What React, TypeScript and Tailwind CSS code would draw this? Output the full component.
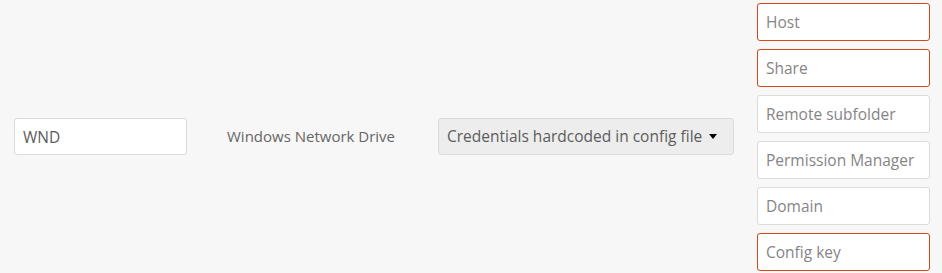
import { useState } from "react"

const fields = [
  { placeholder: "Host", error: true },
  { placeholder: "Share", error: true },
  { placeholder: "Remote subfolder", error: false },
  { placeholder: "Permission Manager", error: false },
  { placeholder: "Domain", error: false },
  { placeholder: "Config key", error: true },
]

export default function App() {
  const [name, setName] = useState("WND")

  return (
    <div className="w-[942px] h-[273px] bg-[#f7f7f7] flex items-center font-['Open_Sans',sans-serif] text-[15.5px] text-[#5c5c5c]">
      {/* Mount name */}
      <div className="pl-[14px] w-[227px]">
        <input
          value={name}
          onChange={(e) => setName(e.target.value)}
          className="w-[173px] h-[37px] px-[8px] bg-white border border-[#dbdbdb] rounded-[3px] outline-none text-[#5c5c5c]"
        />
      </div>

      {/* Backend */}
      <div className="w-[211px] text-[15px] text-[#666]">Windows Network Drive</div>

      {/* Auth mechanism */}
      <div className="w-[319px]">
        <button className="w-[296px] h-[37px] pl-[8px] pr-[16px] flex items-center justify-between bg-[#ededed] border border-[#dbdbdb] rounded-[3px] text-[#5c5c5c]">
          <span>Credentials hardcoded in config file</span>
          <span className="w-0 h-0 border-l-[4.5px] border-r-[4.5px] border-t-[5px] border-l-transparent border-r-transparent border-t-black" />
        </button>
      </div>

      {/* Configuration */}
      <div className="flex flex-col gap-[8px]">
        {fields.map((f) => (
          <input
            key={f.placeholder}
            placeholder={f.placeholder}
            className={
              f.error
                ? "w-[173px] h-[38px] px-[8px] bg-white border border-[#d5461a] rounded-[3px] outline-none placeholder:text-[#858585]"
                : "w-[173px] h-[38px] px-[8px] bg-white border border-[#dbdbdb] rounded-[3px] outline-none placeholder:text-[#858585]"
            }
          />
        ))}
      </div>
    </div>
  )
}
